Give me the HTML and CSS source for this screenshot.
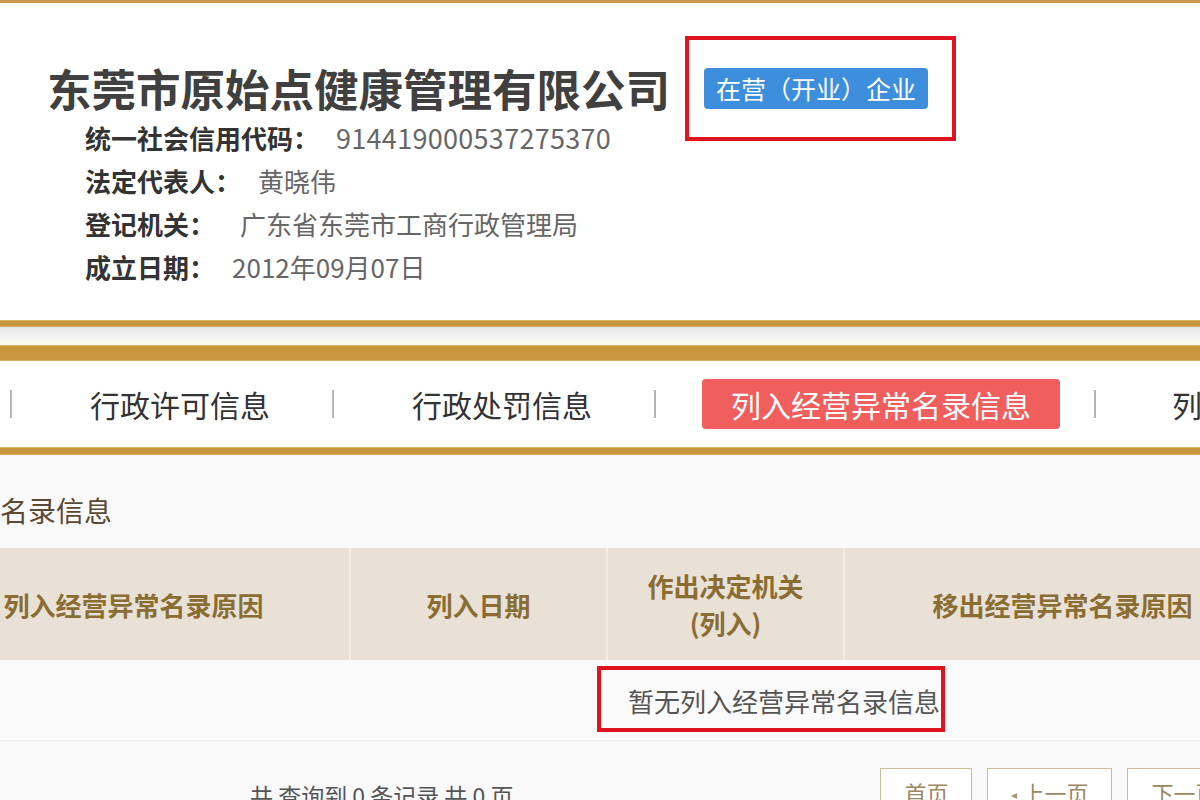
FILE: index.html
```html
<!DOCTYPE html>
<html lang="zh-CN">
<head>
<meta charset="utf-8">
<title>东莞市原始点健康管理有限公司</title>
<link rel="stylesheet" href="styles.css">
</head>
<body>
<div class="page">
  <div class="gold-top"></div>
  <header class="header">
    <div class="title-row">
      <h1 class="company">东莞市原始点健康管理有限公司</h1>
      <span class="badge mark-badge">在营（开业）企业</span>
    </div>
    <ul class="info">
      <li><span class="label">统一社会信用代码：</span><span class="value code">914419000537275370</span></li>
      <li><span class="label">法定代表人：</span><span class="value">黄晓伟</span></li>
      <li><span class="label">登记机关：</span><span class="value wide">广东省东莞市工商行政管理局</span></li>
      <li><span class="label">成立日期：</span><span class="value">2012年09月07日</span></li>
    </ul>
  </header>
  <div class="gold-bar thin"></div>
  <div class="shade"></div>
  <div class="gold-bar thick"></div>
  <nav class="tabs">
    <span class="sep"></span>
    <span class="tab">行政许可信息</span>
    <span class="sep"></span>
    <span class="tab">行政处罚信息</span>
    <span class="sep"></span>
    <span class="tab active">列入经营异常名录信息</span>
    <span class="sep"></span>
    <span class="tab last">列入严重违法失信企业名单信息</span>
  </nav>
  <div class="gold-bar mid"></div>
  <section class="content">
    <h2 class="section-title">名录信息</h2>
    <table class="grid">
      <thead>
        <tr>
          <th class="c1">列入经营异常名录原因</th>
          <th class="c2">列入日期</th>
          <th class="c3">作出决定机关<br>(列入)</th>
          <th class="c4">移出经营异常名录原因</th>
        </tr>
      </thead>
      <tbody>
        <tr>
          <td colspan="4" class="empty"><span class="empty-text">暂无列入经营异常名录信息</span></td>
        </tr>
      </tbody>
    </table>
    <div class="pager">
      <span class="summary">共 查询到 0 条记录 共 0 页</span>
      <div class="buttons">
        <span class="btn">首页</span>
        <span class="btn"><span class="tri">◂</span> 上一页</span>
        <span class="btn">下一页 <span class="tri">▸</span></span>
      </div>
    </div>
  </section>
</div>
</body>
</html>
```

FILE: styles.css
```css
html, body {
  margin: 0;
  padding: 0;
  background: #ffffff;
}
body {
  font-family: "Noto Sans CJK SC", "Noto Sans", sans-serif;
  color: #333;
}
.page {
  width: 1200px;
  height: 800px;
  overflow: hidden;
  background: #ffffff;
}
.gold-top {
  height: 3px;
  background: #c9984a;
}
.header {
  height: 317px;
  box-sizing: border-box;
  padding-top: 59px;
  background: #ffffff;
}
.title-row {
  display: flex;
  align-items: center;
  height: 52px;
  padding-left: 47px;
}
.company {
  margin: 0;
  font-size: 44.5px;
  line-height: 52px;
  font-weight: 700;
  color: #404040;
  white-space: nowrap;
}
.badge {
  margin-left: 34px;
  height: 41px;
  line-height: 41px;
  padding: 0 12px;
  font-size: 25px;
  color: #ffffff;
  background: #3d8edc;
  border-radius: 4px;
  white-space: nowrap;
}
.mark-badge {
  position: relative;
}
.mark-badge::after {
  content: "";
  position: absolute;
  left: -19px;
  right: -28px;
  top: -32px;
  bottom: -32px;
  border: 4px solid #e0141e;
}
.info {
  list-style: none;
  margin: 2px 0 0 0;
  padding: 0 0 0 85px;
}
.info li {
  height: 43px;
  line-height: 43px;
  font-size: 26px;
  white-space: nowrap;
}
.label {
  font-weight: 700;
  color: #333;
}
.value {
  margin-left: 17px;
  color: #666;
}
.value.code {
  font-size: 27px;
  letter-spacing: 0.3px;
}
.value.wide {
  margin-left: 25px;
}
.gold-bar {
  background: #c8963d;
  box-shadow: inset 0 1px 0 #dcb36a, inset 0 -1px 0 #d7ad62;
}
.gold-bar.thin { height: 7px; }
.gold-bar.thick { height: 16px; }
.gold-bar.mid { height: 8px; }
.shade {
  height: 18px;
  background: linear-gradient(#e4e4e8, #f6f6f4 60%, #fbfaf3);
}
.tabs {
  height: 86px;
  display: flex;
  align-items: center;
  padding-left: 10px;
  background: #ffffff;
  white-space: nowrap;
}
.sep {
  flex: none;
  width: 2px;
  height: 28px;
  background: #b5b5b5;
}
.tab {
  flex: none;
  font-size: 30px;
  line-height: 50px;
  color: #333;
  padding: 0 62px 0 78px;
}
.tab.active {
  margin: 0 34px 0 46px;
  padding: 0 29px;
  background: #f15e5e;
  color: #ffffff;
  border-radius: 4px;
}
.tab.last {
  padding-left: 76px;
}
.content {
  height: 345px;
  background: #f9f9f9;
  overflow: hidden;
}
.section-title {
  margin: 0;
  padding-top: 41px;
  font-size: 28px;
  line-height: 28px;
  font-weight: 400;
  color: #5a4934;
  white-space: nowrap;
}
.grid {
  margin-top: 24px;
  margin-left: -82px;
  border-collapse: collapse;
  table-layout: fixed;
  width: 1356px;
}
.grid th {
  height: 112px;
  padding: 0;
  background: #e9e1d6;
  color: #8a6d33;
  font-size: 26px;
  font-weight: 700;
  line-height: 37px;
  text-align: center;
  border-left: 2px solid #f1ece4;
  white-space: nowrap;
}
.grid th.c1 { width: 431px; border-left: none; }
.grid th.c2 { width: 255px; }
.grid th.c3 { width: 235px; }
.grid th.c4 { width: 435px; }
.grid td.empty {
  height: 80px;
  padding: 0 0 0 710px;
  background: #fafafa;
  border-bottom: 1px solid #ebebeb;
  font-size: 26px;
  color: #555;
  text-align: left;
  white-space: nowrap;
}
.empty-text {
  position: relative;
  display: inline-block;
  line-height: 26px;
}
.empty-text::after {
  content: "";
  position: absolute;
  left: -31px;
  right: -5px;
  top: -22px;
  bottom: -18px;
  border: 4px solid #e0141e;
}
.pager {
  display: flex;
  align-items: flex-start;
  padding-top: 27px;
  white-space: nowrap;
}
.summary {
  margin-left: 250px;
  margin-top: 12px;
  font-size: 23px;
  line-height: 30px;
  color: #555;
}
.buttons {
  display: flex;
  gap: 15px;
  margin-left: 367px;
}
.btn {
  flex: none;
  height: 40px;
  line-height: 46px;
  padding: 0 23px;
  border: 1px solid #cdbb95;
  background: #ffffff;
  font-size: 22px;
  color: #9a8763;
}
.tri {
  font-size: 12px;
  vertical-align: 3px;
  color: #a79674;
}
```
